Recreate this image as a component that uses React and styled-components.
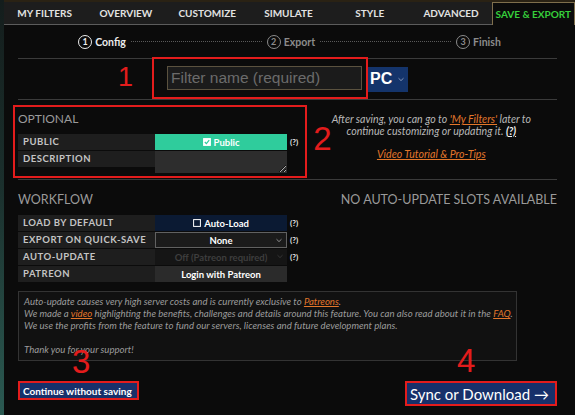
import React from 'react';
import styled, { createGlobalStyle } from 'styled-components';

const GlobalStyle = createGlobalStyle`
  html, body { margin: 0; padding: 0; background: #0b0b0b; }
  body { font-family: Lato, "Open Sans", sans-serif; color: #ddd; }
  * { box-sizing: border-box; }
`;

const RED = '#e31c1c';

const Page = styled.div`
  display: flex;
  width: 575px;
  height: 415px;
  overflow: hidden;
  background: #0b0b0b;
`;

const Strip = styled.div`
  width: 4px;
  flex: none;
  background: linear-gradient(180deg, #141d1c 0%, #1b302d 45%, #2b5a52 100%);
`;

const Main = styled.div`
  flex: 1;
  min-width: 0;
  display: flex;
  flex-direction: column;
`;

const Nav = styled.nav`
  display: flex;
  height: 25px;
  background: #1d1d1d;
  border-top: 2px solid #2a2214;
  border-bottom: 1px solid #5c5c5c;
`;

const Tab = styled.div`
  flex: 1;
  display: flex;
  align-items: center;
  justify-content: center;
  font-size: 10px;
  font-weight: 700;
  white-space: nowrap;
  color: ${p => (p.$active ? '#36cf3b' : '#e2e2e2')};
  ${p => p.$active && `
    background: #0b0b0b;
    border: 1px solid #7f6f4c;
    border-bottom: none;
    margin-bottom: -1px;
  `}
`;

const Stepper = styled.div`
  height: 33px;
  display: flex;
  align-items: center;
  justify-content: center;
`;

const Step = styled.div`
  display: flex;
  align-items: center;
  gap: 3px;
  font-size: 10.5px;
  font-weight: 700;
  color: ${p => (p.$current ? '#ececec' : '#8c8c8c')};
`;

const StepNum = styled.span`
  width: 14px;
  height: 14px;
  border-radius: 50%;
  border: 1.5px solid currentColor;
  display: flex;
  align-items: center;
  justify-content: center;
  font-size: 9px;
  font-weight: 700;
`;

const Dots = styled.span`
  width: 131px;
  margin: 0 5px;
  border-top: 1px dotted #5a5a5a;
`;

const Content = styled.div`
  padding: 0 18px 0 14px;
  display: flex;
  flex-direction: column;
`;

const NameRow = styled.div`
  height: 41px;
  border-top: 1px solid #3b3b3b;
  display: flex;
  align-items: center;
  padding-left: 100px;
`;

const Mark = styled.span`
  font-family: "Liberation Sans", Arial, sans-serif;
  font-size: ${p => p.$size || 33}px;
  line-height: 1;
  color: ${RED};
`;

const NameMark = styled(Mark)`
  margin: -3px 19px 0 0;
`;

const NameBox = styled.div`
  align-self: stretch;
  margin-top: -2px;
  width: 216px;
  border: 2px solid ${RED};
  display: flex;
  align-items: center;
  padding: 0 4px 0 13px;
`;

const NameInput = styled.input`
  width: 195px;
  height: 24px;
  background: #1b1b1b;
  border: 1px solid #5b523f;
  outline: none;
  padding: 0 3px;
  font-family: "Liberation Sans", Arial, sans-serif;
  font-size: 15.5px;
  color: #ddd;
  &::placeholder { color: #6b6b6b; }
`;

const PlatformSelect = styled.div`
  width: 40px;
  height: 25px;
  background: #14346b;
  display: flex;
  align-items: center;
  justify-content: space-between;
  padding: 0 4px 0 2px;
  font-family: "Liberation Sans", Arial, sans-serif;
  font-size: 16px;
  font-weight: 700;
  color: #fff;
`;

const OptionalRow = styled.div`
  height: 80px;
  border-top: 1px solid #3b3b3b;
  display: flex;
  align-items: flex-start;
`;

const OptionalBox = styled.div`
  margin: 5px 0 0 -5px;
  width: 296px;
  height: 73px;
  border: 2px solid ${RED};
  padding: 4px 0 0 3px;
`;

const SectionTitle = styled.div`
  font-size: ${p => p.$size || 12}px;
  line-height: 16px;
  color: #9a9a9a;
  white-space: nowrap;
`;

const Grid = styled.div`
  display: grid;
  grid-template-columns: 137px 132px auto;
  row-gap: 1px;
  margin-top: 7px;
  align-items: start;
`;

const Label = styled.div`
  height: 16px;
  line-height: 16px;
  background: #1e1e1e;
  padding-left: 5px;
  font-size: 9.5px;
  font-weight: 700;
  letter-spacing: 0.5px;
  color: #c4c4c4;
  white-space: nowrap;
`;

const Value = styled.div`
  height: 16px;
  display: flex;
  align-items: center;
  justify-content: center;
  gap: 3px;
  position: relative;
  font-size: 9.5px;
  font-weight: 700;
  white-space: nowrap;
  color: ${p => p.$fg || '#fff'};
  background: ${p => p.$bg || '#2a2a2a'};
  border: ${p => (p.$border ? '1px solid #616161' : 'none')};
`;

const Chevron = styled.svg`
  position: absolute;
  right: 4px;
  top: 5px;
`;

const Desc = styled.textarea`
  height: 22px;
  background: #2d2d2d;
  border: none;
  outline: none;
  resize: vertical;
  display: block;
  width: 132px;
`;

const Hint = styled.span`
  font-size: 8px;
  font-weight: 700;
  color: #e6e6e6;
  padding-left: 3px;
  line-height: 16px;
`;

const OptionalMark = styled(Mark)`
  margin: 22px 0 0 6px;
`;

const HelpBlock = styled.div`
  flex: 1;
  padding: 13px 26px 0 0;
  text-align: center;
  font-size: 10.6px;
  font-style: italic;
  line-height: 12px;
  color: #b8b8b8;
  white-space: nowrap;
`;

const Link = styled.a`
  color: ${p => (p.$plain ? '#f0f0f0' : '#e3772b')};
  text-decoration: underline;
  font-weight: ${p => (p.$plain ? 700 : 400)};
`;

const VideoLink = styled(Link)`
  display: inline-block;
  margin-top: 11px;
`;

const WorkflowRow = styled.div`
  border-top: 1px solid #3b3b3b;
  padding-top: 12px;
`;

const WorkflowHead = styled.div`
  display: flex;
  justify-content: space-between;
`;

const InfoBox = styled.div`
  margin-top: 9px;
  width: 499px;
  height: 70px;
  border: 1px solid #333;
  background: #111;
  padding: 4px 5px;
  font-size: 9.6px;
  font-style: italic;
  line-height: 12px;
  color: #9c9c9c;
  white-space: nowrap;
`;

const Footer = styled.div`
  position: relative;
  margin-top: 20px;
  display: flex;
  justify-content: space-between;
  align-items: flex-start;
`;

const FloatMark = styled(Mark)`
  position: absolute;
  left: ${p => p.$x}px;
  top: ${p => p.$y}px;
`;

const ButtonFrame = styled.div`
  border: 2px solid ${RED};
`;

const Button = styled.button`
  display: flex;
  align-items: center;
  gap: 4px;
  border: none;
  margin: 0;
  background: #17306a;
  color: #fff;
  font-family: Lato, sans-serif;
  white-space: nowrap;
  cursor: pointer;
  width: ${p => p.$w}px;
  height: ${p => p.$h}px;
  font-size: ${p => p.$fs}px;
  font-weight: ${p => p.$fw};
  padding: 0 0 0 ${p => p.$pl}px;
`;

const tabs = ['MY FILTERS', 'OVERVIEW', 'CUSTOMIZE', 'SIMULATE', 'STYLE', 'ADVANCED', 'SAVE & EXPORT'];

const Down = ({ color = '#9a9a9a' }) => (
  <Chevron width="6" height="5" viewBox="0 0 6 5">
    <path d="M0.5 1.2 L3 3.6 L5.5 1.2" fill="none" stroke={color} strokeWidth="0.9" />
  </Chevron>
);

const Box = ({ checked }) => (
  <svg width="8" height="8" viewBox="0 0 8 8">
    <rect x="0.6" y="0.6" width="6.8" height="6.8" fill={checked ? '#fff' : 'none'} stroke="#fff" strokeWidth="1" />
    {checked && <path d="M1.8 4 L3.4 5.6 L6.2 2.2" fill="none" stroke="#2fcc9c" strokeWidth="1.2" />}
  </svg>
);

export default function App() {
  return (
    <>
      <GlobalStyle />
      <Page>
        <Strip />
        <Main>
          <Nav>
            {tabs.map(t => (
              <Tab key={t} $active={t === 'SAVE & EXPORT'}>{t}</Tab>
            ))}
          </Nav>
          <Stepper>
            <Step $current><StepNum>1</StepNum>Config</Step>
            <Dots />
            <Step><StepNum>2</StepNum>Export</Step>
            <Dots />
            <Step><StepNum>3</StepNum>Finish</Step>
          </Stepper>
          <Content>
            <NameRow>
              <NameMark $size={27}>1</NameMark>
              <NameBox>
                <NameInput placeholder="Filter name (required)" />
              </NameBox>
              <PlatformSelect>
                PC
                <svg width="6" height="5" viewBox="0 0 6 5">
                  <path d="M0.5 1.2 L3 3.6 L5.5 1.2" fill="none" stroke="#8fa0c0" strokeWidth="0.9" />
                </svg>
              </PlatformSelect>
            </NameRow>
            <OptionalRow>
              <OptionalBox>
                <SectionTitle>OPTIONAL</SectionTitle>
                <Grid>
                  <Label>PUBLIC</Label>
                  <Value $bg="#2fcc9c"><Box checked />Public</Value>
                  <Hint>(?)</Hint>
                  <Label>DESCRIPTION</Label>
                  <Desc />
                  <span />
                </Grid>
              </OptionalBox>
              <OptionalMark>2</OptionalMark>
              <HelpBlock>
                After saving, you can go to <Link>'My Filters'</Link> later to<br />
                continue customizing or updating it. <Link $plain>(?)</Link><br />
                <VideoLink>Video Tutorial &amp; Pro-Tips</VideoLink>
              </HelpBlock>
            </OptionalRow>
            <WorkflowRow>
              <WorkflowHead>
                <SectionTitle $size={12.5}>WORKFLOW</SectionTitle>
                <SectionTitle $size={12.5}>NO AUTO-UPDATE SLOTS AVAILABLE</SectionTitle>
              </WorkflowHead>
              <Grid>
                <Label>LOAD BY DEFAULT</Label>
                <Value $bg="#0b1a33"><Box />Auto-Load</Value>
                <Hint>(?)</Hint>
                <Label>EXPORT ON QUICK-SAVE</Label>
                <Value $bg="#1b1b1b" $border>None<Down /></Value>
                <Hint>(?)</Hint>
                <Label>AUTO-UPDATE</Label>
                <Value $bg="#151515" $fg="#3e3e3e">Off (Patreon required)<Down color="#3a3a3a" /></Value>
                <Hint>(?)</Hint>
                <Label>PATREON</Label>
                <Value $bg="#2b2b2b">Login with Patreon</Value>
                <span />
              </Grid>
            </WorkflowRow>
            <InfoBox>
              Auto-update causes very high server costs and is currently exclusive to <Link>Patreons</Link>.<br />
              We made a <Link>video</Link> highlighting the benefits, challenges and details around this feature. You can also read about it in the <Link>FAQ</Link>.<br />
              We use the profits from the feature to fund our servers, licenses and future development plans.<br />
              <br />
              Thank you for your support!
            </InfoBox>
            <Footer>
              <FloatMark $x={54} $y={-36}>3</FloatMark>
              <FloatMark $x={439} $y={-37}>4</FloatMark>
              <ButtonFrame>
                <Button $w={117} $h={15} $fs={10} $fw={700} $pl={3}>Continue without saving</Button>
              </ButtonFrame>
              <ButtonFrame>
                <Button $w={148} $h={21} $fs={15} $fw={400} $pl={3}>Sync or Download <span>&#8594;</span></Button>
              </ButtonFrame>
            </Footer>
          </Content>
        </Main>
      </Page>
    </>
  );
}
